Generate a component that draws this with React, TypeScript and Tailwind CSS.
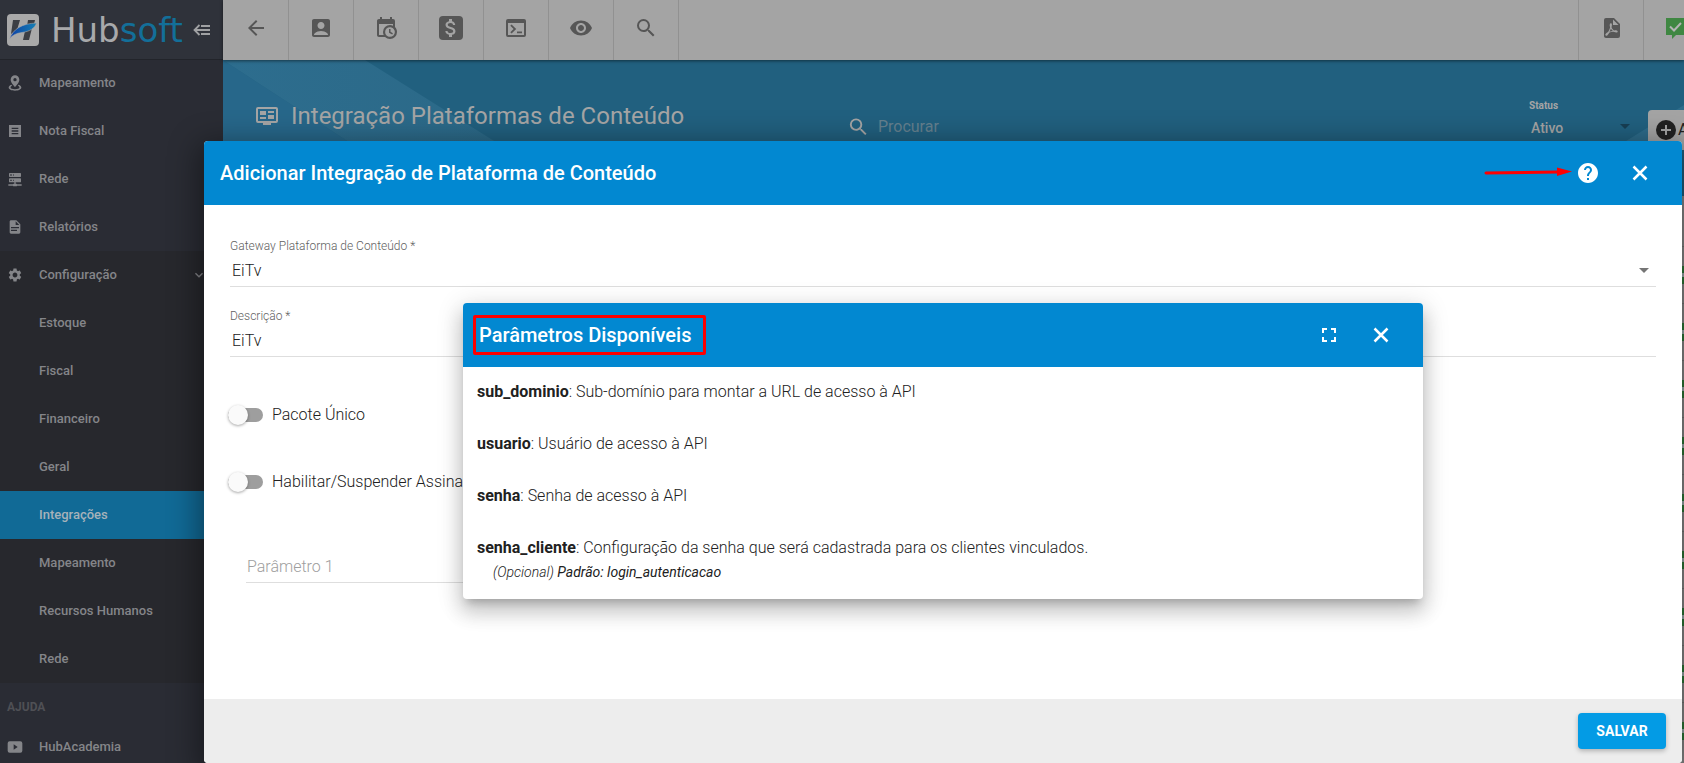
import { useState } from "react";
import type { ReactNode } from "react";
import {
  MdAccountBox,
  MdArrowBack,
  MdArrowDropDown,
  MdAttachMoney,
  MdFullscreen,
  MdHelp,
  MdKeyboardArrowDown,
  MdSearch,
  MdSettings,
  MdVisibility,
} from "react-icons/md";

const icons = {
  note: "M3 3h18v18H3zM7 7v2h10V7zm0 4v2h10v-2zm0 4v2h10v-2z",
  server:
    "M13,19H14A1,1 0 0,1 15,20H22V22H15A1,1 0 0,1 14,23H10A1,1 0 0,1 9,22H2V20H9A1,1 0 0,1 10,19H11V17H4A1,1 0 0,1 3,16V12A1,1 0 0,1 4,11H20A1,1 0 0,1 21,12V16A1,1 0 0,1 20,17H13V19M4,3H20A1,1 0 0,1 21,4V8A1,1 0 0,1 20,9H4A1,1 0 0,1 3,8V4A1,1 0 0,1 4,3M9,7H10V5H9V7M9,15H10V13H9V15M5,5V7H7V5H5M5,13V15H7V13H5Z",
  file: "M13,9H18.5L13,3.5V9M6,2H14L20,8V20A2,2 0 0,1 18,22H6C4.89,22 4,21.1 4,20V4C4,2.89 4.89,2 6,2M15,18V16H6V18H15M18,14V12H6V14H18Z",
  video:
    "M4 3.500h16a3 3 0 0 1 3 3v11a3 3 0 0 1-3 3H4a3 3 0 0 1-3-3v-11a3 3 0 0 1 3-3zM10 8v8l6-4z",
  pin: "M12 0.500a6.500 6.500 0 0 0-6.500 6.500C5.500 11.500 12 18 12 18s6.500-6.500 6.500-11A6.500 6.500 0 0 0 12 0.500zm0 9a2.500 2.500 0 1 1 0-5 2.500 2.500 0 0 1 0 5zM6.500 14.500C4 15.500 2.500 17 2.500 18.800c0 2.800 4.200 4.700 9.500 4.700s9.500-1.900 9.500-4.700c0-1.800-1.500-3.300-4-4.300l-1.300 1.800c1.500.6 2.500 1.500 2.500 2.400 0 1.400-3 2.500-6.700 2.500s-6.700-1.100-6.700-2.500c0-.9 1-1.800 2.500-2.400z",
  calendar:
    "M15,13H16.5V15.82L18.94,17.23L18.19,18.53L15,16.69V13M19,8H5V19H9.67C9.24,18.09 9,17.07 9,16A7,7 0 0,1 16,9C17.07,9 18.09,9.24 19,9.67V8M5,21C3.89,21 3,20.1 3,19V5C3,3.89 3.89,3 5,3H6V1H8V3H16V1H18V3H19A2,2 0 0,1 21,5V11.1C22.24,12.36 23,14.09 23,16A7,7 0 0,1 16,23C14.09,23 12.36,22.24 11.1,21H5M16,11.15A4.85,4.85 0 0,0 11.15,16C11.15,18.68 13.32,20.85 16,20.85A4.85,4.85 0 0,0 20.85,16C20.85,13.32 18.68,11.15 16,11.15Z",
  console:
    "M4 3h16a2 2 0 0 1 2 2v14a2 2 0 0 1-2 2H4a2 2 0 0 1-2-2V5a2 2 0 0 1 2-2zM4 7v12h16V7zM6.300 9.700l1.300-1.300 4.600 4.600-4.600 4.600-1.300-1.300L9.600 13zM13 15.500h5v1.800h-5z",
  pdf: "M14,9H19.5L14,3.5V9M7,2H15L21,8V20A2,2 0 0,1 19,22H7C5.89,22 5,21.1 5,20V4A2,2 0 0,1 7,2M11.93,12.44C12.34,13.34 12.86,14.08 13.46,14.59L13.87,14.91C13,15.07 11.8,15.35 10.53,15.84V15.84L10.42,15.88L10.92,14.84C11.37,13.97 11.7,13.18 11.93,12.44M18.41,16.25C18.59,16.07 18.68,15.84 18.69,15.59C18.72,15.39 18.67,15.2 18.57,15.04C18.28,14.57 17.53,14.35 16.29,14.35L15,14.42L14.13,13.84C13.5,13.32 12.93,12.41 12.53,11.28L12.57,11.14C12.9,9.81 13.21,8.2 12.55,7.54C12.39,7.38 12.17,7.3 11.94,7.3H11.7C11.33,7.3 11,7.69 10.91,8.07C10.54,9.4 10.76,10.13 11.13,11.34V11.35C10.88,12.23 10.56,13.25 10.05,14.28L9.09,16.08L8.2,16.57C7,17.32 6.43,18.16 6.32,18.69C6.28,18.88 6.3,19.05 6.37,19.23L6.4,19.28L6.88,19.59L7.32,19.7C8.13,19.7 9.05,18.75 10.29,16.63L10.47,16.56C11.5,16.23 12.78,16 14.5,15.81C15.53,16.32 16.74,16.55 17.5,16.55C17.94,16.55 18.24,16.44 18.41,16.25Z",
  guide:
    "M21,17V5H3V17H21M21,3A2,2 0 0,1 23,5V17A2,2 0 0,1 21,19H16V21H8V19H3A2,2 0 0,1 1,17V5A2,2 0 0,1 3,3H21M5,7H11V11H5V7M5,13H11V15H5V13M13,7H19V9H13V7M13,11H19V15H13V11Z",
};

function Icon({ name, className }: { name: keyof typeof icons; className: string }) {
  return (
    <svg viewBox="0 0 24 24" className={className} fill="currentColor" aria-hidden="true">
      <path fillRule="evenodd" d={icons[name]} />
    </svg>
  );
}

function CloseIcon() {
  return (
    <svg viewBox="0 0 24 24" className="size-6" fill="none" stroke="currentColor" aria-hidden="true">
      <path d="M5.500 5.500l13 13M18.500 5.500l-13 13" strokeWidth="2.500" />
    </svg>
  );
}

const menu: { label: string; icon: ReactNode }[] = [
  { label: "Mapeamento", icon: <Icon name="pin" className="size-4" /> },
  { label: "Nota Fiscal", icon: <Icon name="note" className="size-4" /> },
  { label: "Rede", icon: <Icon name="server" className="size-4" /> },
  { label: "Relatórios", icon: <Icon name="file" className="size-4" /> },
];

const submenu = [
  "Estoque",
  "Fiscal",
  "Financeiro",
  "Geral",
  "Integrações",
  "Mapeamento",
  "Recursos Humanos",
  "Rede",
];

function Logo() {
  return (
    <div className="flex h-[59px] shrink-0 items-center bg-[#2f323a] pl-[7px]">
      <svg viewBox="0 0 32 32" className="size-8 shrink-0" aria-hidden="true">
        <defs>
          <linearGradient id="swoosh" x1="0" x2="1">
            <stop offset="0" stopColor="#0d3fa6" />
            <stop offset="1" stopColor="#1580b4" />
          </linearGradient>
        </defs>
        <rect width="32" height="32" rx="4" fill="#a9a9a9" />
        <path d="M6 6h7l-3 10-6 4zM21 6h7l-1 4-7 2zM18 17l7-3-3 12h-6z" fill="#3b3e44" />
        <path
          d="M2.500 25C6 15 15 9.500 29.500 9 28 14 23 17.500 15 18.500 9 19.200 5 21.500 2.500 25z"
          fill="url(#swoosh)"
          stroke="#a9a9a9"
          strokeWidth="0.600"
        />
      </svg>
      <span className="ml-3 flex-1 font-[DejaVu_Sans,sans-serif] text-[34px] leading-none text-[#a8a9ab]">
        Hub<span className="text-[#136f99]">soft</span>
      </span>
      <button aria-label="Recolher menu" className="mr-3 text-[#a0a1a3]">
        <svg viewBox="0 0 18 12" className="h-3 w-[18px]" fill="none" stroke="currentColor" strokeWidth="1.800">
          <path d="M6.500 1L1.500 6l5 5M2 6h15M8 2h9M8 10h9" />
        </svg>
      </button>
    </div>
  );
}

function Sidebar() {
  return (
    <aside className="flex w-[223px] shrink-0 flex-col overflow-hidden bg-[#2a2c34] text-[13px] font-medium text-[#848589]">
      <Logo />
      <nav className="border-t border-[#22242a]">
        {menu.map((item) => (
          <a key={item.label} href="#" className="flex h-12 items-center pl-[7px] first:-mt-px">
            {item.icon}
            <span className="ml-4">{item.label}</span>
          </a>
        ))}
        <div className="bg-[#27282d]">
          <a href="#" className="flex h-12 items-center pl-[7px]">
            <MdSettings className="size-4" />
            <span className="ml-4 flex-1">Configuração</span>
            <MdKeyboardArrowDown className="mr-4 size-4" />
          </a>
          {submenu.map((label) => (
            <a
              key={label}
              href="#"
              className={
                label === "Integrações"
                  ? "flex h-12 items-center bg-[#116a96] pl-[39px] text-[#a6b2ba]"
                  : "flex h-12 items-center pl-[39px]"
              }
            >
              {label}
            </a>
          ))}
        </div>
        <h2 className="flex h-10 items-center pt-2 pl-[7px] text-xs font-bold text-[#4f5055]">AJUDA</h2>
        <a href="#" className="flex h-12 items-center pl-[7px]">
          <Icon name="video" className="size-4" />
          <span className="ml-4">HubAcademia</span>
        </a>
      </nav>
    </aside>
  );
}

function ToolButton({ label, children }: { label: string; children: ReactNode }) {
  return (
    <button
      aria-label={label}
      className="flex w-[65px] shrink-0 items-center justify-center border-r border-[#919191] pb-1"
    >
      {children}
    </button>
  );
}

function Toolbar() {
  return (
    <header className="relative z-10 flex h-[60px] shrink-0 bg-[#a4a4a4] pl-px text-[#565656] shadow-[0_1px_3px_rgba(0,0,0,0.5)]">
      <ToolButton label="Voltar">
        <MdArrowBack className="size-6" />
      </ToolButton>
      <ToolButton label="Clientes">
        <MdAccountBox className="size-6" />
      </ToolButton>
      <ToolButton label="Agenda">
        <Icon name="calendar" className="size-6" />
      </ToolButton>
      <ToolButton label="Financeiro">
        <span className="flex size-6 items-center justify-center rounded bg-[#565656] text-[#a4a4a4]">
          <MdAttachMoney className="size-6" />
        </span>
      </ToolButton>
      <ToolButton label="Console">
        <Icon name="console" className="size-6" />
      </ToolButton>
      <ToolButton label="Visualizar">
        <MdVisibility className="size-6" />
      </ToolButton>
      <ToolButton label="Pesquisar">
        <MdSearch className="size-6" />
      </ToolButton>
      <div className="flex-1 border-r border-[#919191]" />
      <ToolButton label="Relatório PDF">
        <Icon name="pdf" className="size-6" />
      </ToolButton>
      <button aria-label="Mensagens" className="w-10 shrink-0 overflow-hidden pb-1 pl-5">
        <svg viewBox="0 0 24 24" className="size-6" aria-hidden="true">
          <path d="M2 2h20v17H12l-4 4v-4H2z" fill="#3f8742" />
          <path d="M6 10.500l4 4 7-7.500" fill="none" stroke="#b4b4b4" strokeWidth="2" />
        </svg>
      </button>
    </header>
  );
}

function PageHeader() {
  return (
    <div className="relative h-[136px] shrink-0 bg-[#21607f] text-[#a5a5a5]">
      <svg className="absolute inset-0 h-full w-full" preserveAspectRatio="none" viewBox="0 0 1461 136" aria-hidden="true">
        <defs>
          <linearGradient id="band" x1="0" x2="1">
            <stop offset="0" stopColor="#2d6d8e" />
            <stop offset="1" stopColor="#2b6886" />
          </linearGradient>
        </defs>
        <path d="M0 0L209 136H0z" fill="#27678a" />
        <path d="M0 0H142L359 136H209z" fill="url(#band)" />
        <path d="M1461 45L1395 86H1461z" fill="#2d6c8b" />
      </svg>
      <div className="relative flex items-start pl-8">
        <h1 className="flex w-[592px] items-center pt-10 text-2xl">
          <Icon name="guide" className="mr-3 size-6" />
          Integração Plataformas de Conteúdo
        </h1>
        <label className="flex flex-1 items-center pt-[55px]">
          <MdSearch className="size-6" />
          <input
            placeholder="Procurar"
            aria-label="Procurar"
            className="ml-2 w-full bg-transparent text-base outline-none placeholder:text-[#65818f]"
          />
        </label>
        <label className="w-[100px] shrink-0 pt-[38px] text-[10px] font-bold">
          Status
          <span className="relative flex items-center">
            <select className="w-full appearance-none bg-transparent pt-[5px] pl-0.5 text-sm font-medium outline-none">
              <option>Ativo</option>
            </select>
            <MdArrowDropDown className="absolute -right-2 bottom-0 size-6 text-[#173f54]" />
          </span>
        </label>
        <button
          aria-label="Adicionar"
          className="mt-[50px] ml-[19px] flex h-10 w-9 shrink-0 items-center overflow-hidden rounded-l bg-[#a4a4a4] pl-2 text-base text-[#222]"
        >
          <svg viewBox="0 0 20 20" className="mr-0.5 size-5 shrink-0" aria-hidden="true">
            <circle cx="10" cy="10" r="10" fill="#222" />
            <path d="M10 5v10M5 10h10" stroke="#a4a4a4" strokeWidth="2" />
          </svg>
          A
        </button>
      </div>
    </div>
  );
}

// status badges of the list, only their edge shows beside the dialog
function ListRows() {
  return (
    <div className="flex-1 overflow-hidden bg-[#8a8a8a] pt-[50px]">
      {Array.from({ length: 9 }, (_, i) => (
        <div key={i} className="flex h-[57px] items-center justify-end border-t border-[#777]">
          <span className="h-[18px] w-2 border-y-[7px] border-[#2f7a38] bg-[#9aa]" />
        </div>
      ))}
    </div>
  );
}

function Switch({ label }: { label: string }) {
  const [on, setOn] = useState(false);
  return (
    <label className="flex h-6 items-center text-base font-light">
      <input
        type="checkbox"
        className="peer sr-only"
        checked={on}
        onChange={() => setOn(!on)}
      />
      <span className="relative -ml-0.5 h-[14px] w-[35px] rounded-full bg-[#9e9e9e]">
        <span
          className={
            on
              ? "absolute -top-[3px] right-0 size-5 rounded-full bg-[#039be5] shadow"
              : "absolute -top-[3px] left-0 size-5 rounded-full bg-[#fafafa] shadow-[0_1px_3px_rgba(0,0,0,0.35)]"
          }
        />
      </span>
      <span className="ml-[9px]">{label}</span>
    </label>
  );
}

const params = [
  { name: "sub_dominio", text: "Sub-domínio para montar a URL de acesso à API" },
  { name: "usuario", text: "Usuário de acesso à API" },
  { name: "senha", text: "Senha de acesso à API" },
  {
    name: "senha_cliente",
    text: "Configuração da senha que será cadastrada para os clientes vinculados.",
  },
];

function ParamsDialog() {
  return (
    <section
      role="dialog"
      aria-label="Parâmetros Disponíveis"
      className="w-[960px] overflow-hidden rounded bg-white shadow-[0_7px_8px_-4px_rgba(0,0,0,0.2),0_13px_19px_2px_rgba(0,0,0,0.14),0_5px_24px_4px_rgba(0,0,0,0.12)]"
    >
      <header className="flex h-16 items-center bg-[#0288d1] pr-[22px] pl-[10px] text-white">
        <h3 className="flex h-10 items-center rounded-xs border-3 border-[#f00] pr-3 pl-[3px] text-xl font-medium">
          Parâmetros Disponíveis
        </h3>
        <span className="flex-1" />
        <button aria-label="Tela cheia" className="mr-3 flex size-10 items-center justify-center">
          <MdFullscreen className="size-6" />
        </button>
        <button aria-label="Fechar parâmetros" className="flex size-10 items-center justify-center">
          <CloseIcon />
        </button>
      </header>
      <div className="px-[14px] pt-[13px] pb-[17px] text-base font-light">
        <dl className="flex flex-col gap-7">
          {params.map((p) => (
            <div key={p.name}>
              <dt className="inline font-bold">{p.name}</dt>
              <dd className="inline">: {p.text}</dd>
            </div>
          ))}
        </dl>
        <p className="pt-0.5 pl-4 text-sm italic">
          (Opcional) <b>Padrão: login_autenticacao</b>
        </p>
      </div>
    </section>
  );
}

function IntegrationDialog() {
  return (
    <section
      role="dialog"
      aria-label="Adicionar Integração de Plataforma de Conteúdo"
      className="relative flex flex-1 flex-col rounded bg-white text-[#212121] shadow-[0_8px_30px_6px_rgba(0,0,0,0.4)]"
    >
      <header className="flex h-16 shrink-0 items-center rounded-t bg-[#0288d1] pr-[22px] pl-4 text-white">
        <h2 className="flex-1 text-xl font-medium">
          Adicionar Integração de Plataforma de Conteúdo
        </h2>
        <svg viewBox="0 0 88 12" className="-mr-1 h-3 w-[88px]" aria-hidden="true">
          <path d="M2 6L74 5" stroke="#f00" strokeWidth="3" strokeLinecap="round" />
          <path d="M73 0.500L88 4.500 73 9z" fill="#f00" />
        </svg>
        <button aria-label="Ajuda" className="mr-3 flex size-10 items-center justify-center">
          <MdHelp className="size-6" />
        </button>
        <button aria-label="Fechar" className="flex size-10 items-center justify-center">
          <CloseIcon />
        </button>
      </header>
      <form className="flex flex-1 flex-col px-[26px] pt-8" onSubmit={(e) => e.preventDefault()}>
        <div className="relative h-[70px]">
          <label htmlFor="gateway" className="block text-xs leading-[18px] font-light text-[#616161]">
            Gateway Plataforma de Conteúdo *
          </label>
          <select
            id="gateway"
            className="block h-8 w-full appearance-none border-b border-[#dedede] bg-transparent pl-0.5 text-base font-light outline-none"
          >
            <option>EiTv</option>
          </select>
          <MdArrowDropDown className="pointer-events-none absolute top-[21px] right-0 size-6 text-[#757575]" />
        </div>
        <div className="h-[70px]">
          <label htmlFor="descricao" className="block text-xs leading-[18px] font-light text-[#616161]">
            Descrição *
          </label>
          <input
            id="descricao"
            defaultValue="EiTv"
            className="block h-8 w-full border-b border-[#dedede] pl-0.5 text-base font-light outline-none"
          />
        </div>
        <div className="flex flex-col gap-[43px] pt-[26px]">
          <Switch label="Pacote Único" />
          <Switch label="Habilitar/Suspender Assina" />
        </div>
        <input
          placeholder="Parâmetro 1"
          aria-label="Parâmetro 1"
          className="mt-[57px] ml-4 h-8 w-[600px] border-b border-[#dedede] pl-px text-base font-light outline-none placeholder:text-[#9e9e9e]"
        />
      </form>
      <footer className="flex h-16 shrink-0 items-center justify-end rounded-b bg-[#ededed] pr-4">
        <button className="h-9 w-[88px] rounded bg-[#039be5] text-sm font-bold text-white shadow-[0_2px_5px_rgba(0,0,0,0.26)]">
          SALVAR
        </button>
      </footer>
      <div className="pointer-events-none absolute inset-x-0 top-[162px] flex justify-center">
        <ParamsDialog />
      </div>
    </section>
  );
}

export default function App() {
  return (
    <div className="relative flex h-screen overflow-hidden font-[Roboto,sans-serif]">
      <Sidebar />
      <main className="flex min-w-0 flex-1 flex-col">
        <Toolbar />
        <PageHeader />
        <ListRows />
      </main>
      <div className="absolute inset-0 z-20 flex pt-[141px] pr-0.5 pl-[204px]">
        <IntegrationDialog />
      </div>
    </div>
  );
}
